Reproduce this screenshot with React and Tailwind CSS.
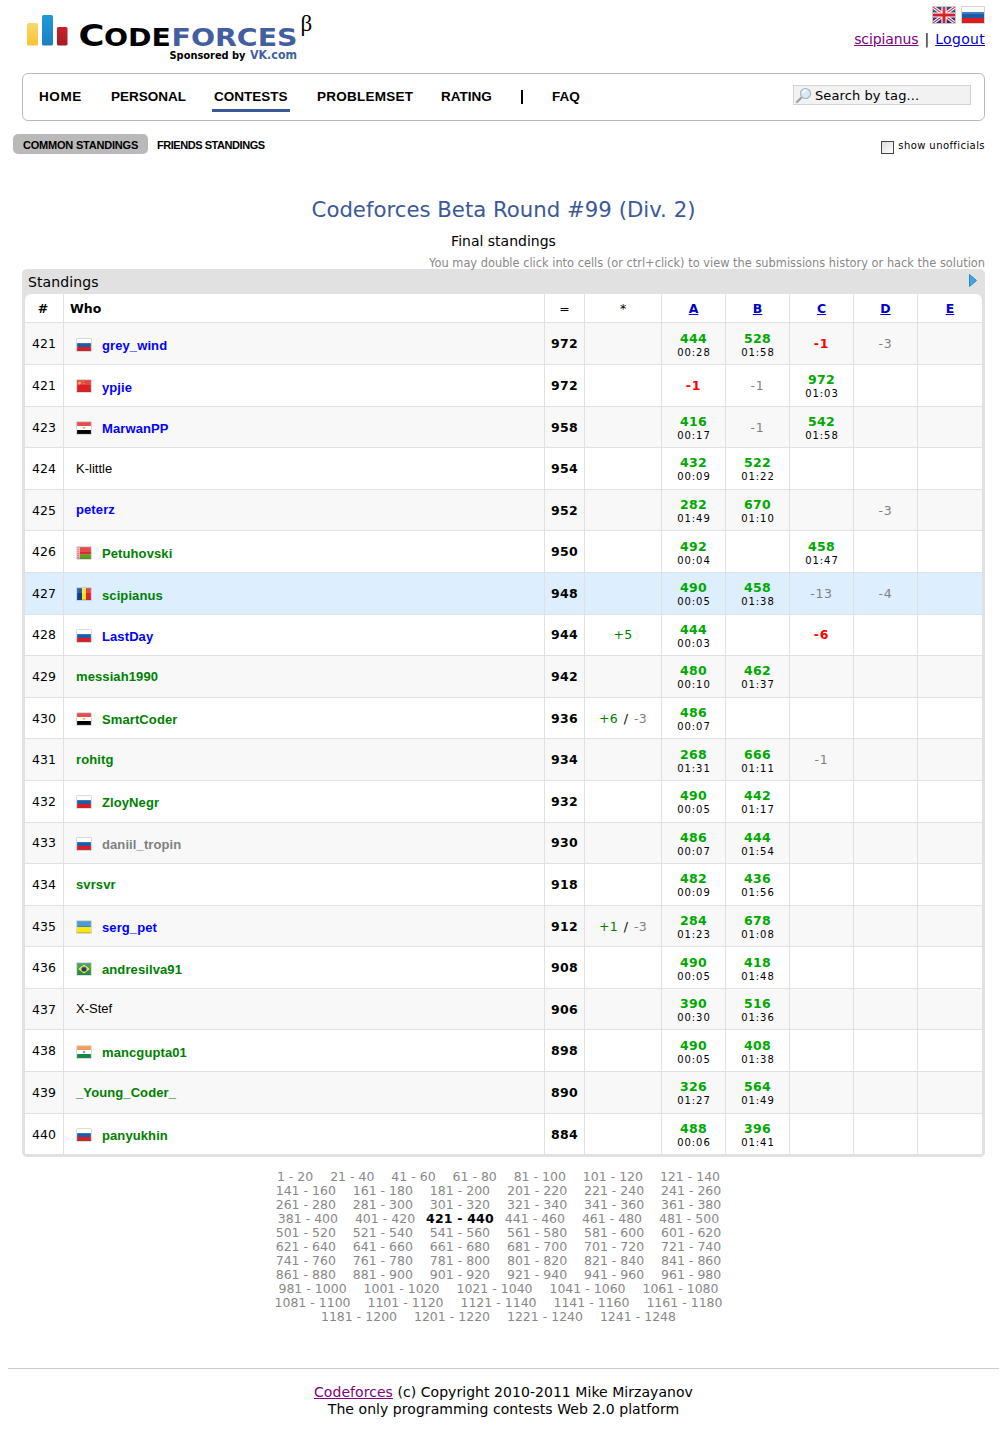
import React from "react";

const BLUE = "text-[#0000ff]";
const GREEN = "text-[#008000]";
const GRAY = "text-[#808080]";
const BLACK = "text-black";

const rows = [
  [421, "ru", "grey_wind", BLUE, 972, "", ["444 00:28", "528 01:58", "!-1", "-3", ""]],
  [421, "cn", "ypjie", BLUE, 972, "", ["!-1", "-1", "972 01:03", "", ""]],
  [423, "eg", "MarwanPP", BLUE, 958, "", ["416 00:17", "-1", "542 01:58", "", ""]],
  [424, "", "K-little", BLACK, 954, "", ["432 00:09", "522 01:22", "", "", ""]],
  [425, "", "peterz", BLUE, 952, "", ["282 01:49", "670 01:10", "", "-3", ""]],
  [426, "by", "Petuhovski", GREEN, 950, "", ["492 00:04", "", "458 01:47", "", ""]],
  [427, "ro", "scipianus", GREEN, 948, "", ["490 00:05", "458 01:38", "-13", "-4", ""]],
  [428, "ru", "LastDay", BLUE, 944, "+5", ["444 00:03", "", "!-6", "", ""]],
  [429, "", "messiah1990", GREEN, 942, "", ["480 00:10", "462 01:37", "", "", ""]],
  [430, "eg", "SmartCoder", GREEN, 936, "+6/-3", ["486 00:07", "", "", "", ""]],
  [431, "", "rohitg", GREEN, 934, "", ["268 01:31", "666 01:11", "-1", "", ""]],
  [432, "ru", "ZloyNegr", GREEN, 932, "", ["490 00:05", "442 01:17", "", "", ""]],
  [433, "ru", "daniil_tropin", GRAY, 930, "", ["486 00:07", "444 01:54", "", "", ""]],
  [434, "", "svrsvr", GREEN, 918, "", ["482 00:09", "436 01:56", "", "", ""]],
  [435, "ua", "serg_pet", BLUE, 912, "+1/-3", ["284 01:23", "678 01:08", "", "", ""]],
  [436, "br", "andresilva91", GREEN, 908, "", ["490 00:05", "418 01:48", "", "", ""]],
  [437, "", "X-Stef", BLACK, 906, "", ["390 00:30", "516 01:36", "", "", ""]],
  [438, "in", "mancgupta01", GREEN, 898, "", ["490 00:05", "408 01:38", "", "", ""]],
  [439, "", "_Young_Coder_", GREEN, 890, "", ["326 01:27", "564 01:49", "", "", ""]],
  [440, "ru", "panyukhin", GREEN, 884, "", ["488 00:06", "396 01:41", "", "", ""]],
];

const pageLines = [
  [1, 7], [8, 13], [14, 19], [20, 25], [26, 31], [32, 37], [38, 43], [44, 49], [50, 54], [55, 59], [60, 63],
];

const COLS = "grid grid-cols-[39px_481px_40px_77px_64px_64px_64px_64px_64px]";

function FlagArt({ code }) {
  switch (code) {
    case "ru":
      return (<><rect width="14" height="4" fill="#fff" /><rect y="4" width="14" height="4" fill="#1c5ca8" /><rect y="8" width="14" height="4" fill="#dd1c22" /></>);
    case "cn":
      return (<><rect width="14" height="12" fill="#dd1f22" /><path d="M2 1.500h1.500v1h1v1h-1l-.5 1h-1l-.5-1h-.5v-1h1z" fill="#f8b034" /><path d="M5.500 1h1v1h-1zM6.500 3h1v1h-1z" fill="#f39a3a" /></>);
    case "eg":
      return (<><rect width="14" height="4" fill="#e02a2e" /><rect y="4" width="14" height="4" fill="#fff" /><rect y="8" width="14" height="4" fill="#000" /><path d="M5.500 5h3l-1 2h-1z" fill="#e9b94f" /></>);
    case "by":
      return (<><rect width="14" height="7.500" fill="#dd2a2e" /><rect y="7.500" width="14" height="4.500" fill="#55a51c" /><rect width="3" height="12" fill="#f0aaaa" /><path d="M1 0v12" stroke="#dd3a3e" strokeWidth="1" strokeDasharray="1 1" /></>);
    case "ro":
      return (<><rect width="5" height="12" fill="#0d3a92" /><rect x="5" width="4" height="12" fill="#fbe11a" /><rect x="9" width="5" height="12" fill="#d9222a" /></>);
    case "ua":
      return (<><rect width="14" height="6" fill="#2f87c4" /><rect y="6" width="14" height="6" fill="#fbe70c" /></>);
    case "br":
      return (<><rect width="14" height="12" fill="#1d9150" /><path d="M7 1.500L13 6 7 10.500 1 6z" fill="#f6e21b" /><circle cx="7" cy="6" r="2.600" fill="#243a86" /></>);
    case "in":
      return (<><rect width="14" height="4" fill="#f08a3c" /><rect y="4" width="14" height="4" fill="#fff" /><rect y="8" width="14" height="4" fill="#128a48" /><circle cx="7" cy="6" r="1.300" fill="#8fa4d4" /></>);
    default:
      return null;
  }
}

function Flag({ code }) {
  return (
    <svg width="16" height="14" viewBox="-1 -1 16 14" className="block shrink-0">
      <rect x="-1" y="-1" width="16" height="14" rx="1.500" fill="#8a8a8a" opacity=".3" />
      <FlagArt code={code} />
      <rect width="14" height="5" fill="#fff" opacity=".16" />
      <rect x=".5" y=".5" width="13" height="11" fill="none" stroke="#fff" opacity=".12" />
      <rect y="11" width="14" height="1" fill="#000" opacity=".18" />
    </svg>
  );
}

function BigFlags() {
  return (
    <div className="flex gap-[5px]">
      <svg width="24" height="18" viewBox="0 0 24 18">
        <rect width="24" height="18" rx="1" fill="#c9c9c9" />
        <svg x="1" y="1" width="22" height="16" viewBox="0 0 22 16">
          <rect width="22" height="16" fill="#22307e" />
          <path d="M0 0L22 16M22 0L0 16" stroke="#fff" strokeWidth="3.400" />
          <path d="M0 0L22 16M22 0L0 16" stroke="#d8303a" strokeWidth="1.300" />
          <path d="M11 0V16M0 8H22" stroke="#fff" strokeWidth="5.200" />
          <path d="M11 0V16M0 8H22" stroke="#d41f2b" strokeWidth="3" />
          <rect width="22" height="7" fill="#fff" opacity=".12" />
        </svg>
      </svg>
      <svg width="24" height="18" viewBox="0 0 24 18">
        <rect width="24" height="18" rx="1" fill="#d4d4d4" />
        <rect x="1" y="1" width="22" height="5" fill="#fafafa" />
        <rect x="1" y="6" width="22" height="6" fill="#1c5ca8" />
        <rect x="1" y="6" width="22" height="2" fill="#3f7fc0" />
        <rect x="1" y="12" width="22" height="5" fill="#dd1c1c" />
      </svg>
    </div>
  );
}

function Logo() {
  return (
    <svg width="320" height="66" viewBox="0 0 320 66" role="img">
      <defs>
        <linearGradient id="ly" x1="0" y1="0" x2="0" y2="1"><stop offset="0" stopColor="#fbd775" /><stop offset="1" stopColor="#f9c32c" /></linearGradient>
        <linearGradient id="lb" x1="0" y1="0" x2="0" y2="1"><stop offset="0" stopColor="#209ad9" /><stop offset="1" stopColor="#1a7fc1" /></linearGradient>
        <linearGradient id="lr" x1="0" y1="0" x2="0" y2="1"><stop offset="0" stopColor="#c8202a" /><stop offset="1" stopColor="#a51b26" /></linearGradient>
      </defs>
      <rect x="27" y="23" width="11" height="22.500" rx="1.500" fill="url(#ly)" />
      <rect x="42" y="15" width="11" height="30.500" rx="1.500" fill="url(#lb)" />
      <rect x="57" y="27" width="10.500" height="18.500" rx="1.500" fill="url(#lr)" />
      <g fontFamily="'DejaVu Sans', sans-serif" fontWeight="700">
        <text x="78.500" y="45.500" fontSize="30" textLength="26" lengthAdjust="spacingAndGlyphs">C</text>
        <text x="104" y="45.500" fontSize="25" textLength="67" lengthAdjust="spacingAndGlyphs">ODE</text>
        <text x="171.500" y="45.500" fontSize="25" fill="#435f9f" textLength="126" lengthAdjust="spacingAndGlyphs">FORCES</text>
        <text x="169.500" y="58.500" fontSize="10.500" textLength="76" lengthAdjust="spacingAndGlyphs">Sponsored by</text>
        <text x="250" y="59" fontSize="11.500" fill="#435f9f" textLength="47" lengthAdjust="spacingAndGlyphs">VK.com</text>
      </g>
      <text x="300.500" y="31" fontSize="23" fontFamily="'Liberation Serif', serif">β</text>
    </svg>
  );
}

function Problem({ value }) {
  if (!value) return null;
  if (value.startsWith("!")) return <span className="pt-[2px] text-[12.5px] font-bold text-[#ff0000] tracking-[0.9px]">{value.slice(1)}</span>;
  if (value.startsWith("-")) return <span className="pt-[2px] text-[12.5px] text-[#808080] tracking-[0.7px]">{value}</span>;
  const [points, time] = value.split(" ");
  return (
    <div className="flex flex-col items-center pt-[2px]">
      <span className="text-[12.5px] leading-[15px] font-bold text-[#00a900] tracking-[0.3px]">{points}</span>
      <span className="text-[10px] leading-[13px] tracking-[0.9px] pl-px">{time}</span>
    </div>
  );
}

function Hacks({ value }) {
  if (!value) return null;
  const [plus, minus] = value.split("/");
  return (
    <span className="pt-[2px] text-[12.5px] tracking-[0.3px] [word-spacing:1.5px]">
      <span className="text-[#008000]">{plus}</span>
      {minus && <> / <span className="text-[#808080]">{minus}</span></>}
    </span>
  );
}

function Row({ row, index }) {
  const [rank, flag, name, color, score, hacks, problems] = row;
  const bg = rank === 427 ? "bg-[#ddeeff]" : index % 2 === 0 ? "bg-[#f8f8f8]" : "bg-white";
  const cell = "flex items-center justify-center border-r border-b border-[#e1e1e1]";
  return (
    <div className={`${COLS} h-[41.6px] ${bg}`}>
      <div className={`${cell} pt-[2px] text-[12.5px]`}>{rank}</div>
      <div className={`flex items-center border-r border-b border-[#e1e1e1] pl-[12px] ${color}`}>
        {flag && <span className="mr-[10px] pt-[2px]"><Flag code={flag} /></span>}
        <span className={`font-['Liberation_Sans',sans-serif] text-[13px] ${color === BLACK ? "" : "font-bold tracking-[0.1px]"} ${flag ? "pt-[4px]" : ""}`}>{name}</span>
      </div>
      <div className={`${cell} pt-[2px] text-[12.5px] font-bold tracking-[0.3px]`}>{score}</div>
      <div className={cell}><Hacks value={hacks} /></div>
      {problems.map((p, i) => (
        <div key={i} className={`flex items-center justify-center border-b border-[#e1e1e1] ${i < 4 ? "border-r" : ""}`}><Problem value={p} /></div>
      ))}
    </div>
  );
}

function Pages({ from, to }) {
  const items = [];
  for (let i = from; i <= to; i++) {
    const start = (i - 1) * 20 + 1;
    items.push({ start, end: i === 63 ? 1248 : start + 19 });
  }
  return (
    <div className="flex justify-center gap-[16.9px] h-[14px] leading-[14px] whitespace-nowrap">
      {items.map(({ start, end }) =>
        start === 421 ? (
          <span key={start} className="-mx-[6px] font-bold text-black tracking-[0.2px]">{start} - {end}</span>
        ) : (
          <span key={start}>{start} - {end}</span>
        )
      )}
    </div>
  );
}

export default function App() {
  return (
    <div className="w-[1007px] h-[1442px] overflow-hidden bg-white text-black font-['DejaVu_Sans',sans-serif]">
      <header className="flex justify-between h-[73px] pr-[22px]">
        <Logo />
        <div className="flex flex-col items-end pt-[6px]">
          <BigFlags />
          <div className="mt-[6px] text-[14px] leading-[18px] whitespace-nowrap">
            <a className="underline text-[#800080] tracking-[-0.1px]">scipianus</a>
            <span className="mx-[6px]">|</span>
            <a className="underline text-[#0000cc] tracking-[0.3px]">Logout</a>
          </div>
        </div>
      </header>

      <nav className="mx-[22px] h-[48px] w-[963px] border border-[#b9b9b9] rounded-[6px] flex items-start pl-[16px] pr-[13px] font-['Liberation_Sans',sans-serif] font-bold text-[13.5px] leading-[18px]">
        <span className="mt-[14px] w-[72px] tracking-[0.6px]">HOME</span>
        <span className="mt-[14px] w-[101px]">PERSONAL</span>
        <span className="mt-[14px] w-[78px] pl-[2px] h-[24px] border-b-[3px] border-[#3b5998]">CONTESTS</span>
        <span className="mt-[14px] ml-[27px] w-[124px] tracking-[0.25px]">PROBLEMSET</span>
        <span className="mt-[14px] w-[80px]">RATING</span>
        <span className="mt-[16px] w-[2px] h-[14px] bg-black" />
        <span className="mt-[14px] ml-[29px]">FAQ</span>
        <div className="mt-[11px] ml-auto w-[178px] h-[20px] flex items-center border border-[#d3d3d3] bg-[#f2f2f2] font-['DejaVu_Sans',sans-serif] font-normal text-[13px]">
          <svg width="18" height="18" viewBox="0 0 18 18" className="ml-[1px] shrink-0">
            <path d="M2 16L7 11" stroke="#a0a0a0" strokeWidth="2.400" strokeLinecap="round" />
            <circle cx="10.500" cy="7.500" r="5" fill="#d5ecf8" stroke="#b0b4b8" strokeWidth="1.200" />
            <path d="M7.800 7a3 3 0 0 1 3-2.500" fill="none" stroke="#fff" strokeWidth="1.300" />
          </svg>
          <span className="ml-[2px] pt-[2px] tracking-[0.1px]">Search by tag...</span>
        </div>
      </nav>

      <div className="flex items-start justify-between pl-[13px] pr-[22px] mt-[13px] h-[62px]">
        <div className="flex font-['Liberation_Sans',sans-serif] font-bold text-[11px] leading-[22px] whitespace-nowrap">
          <span className="w-[135px] h-[20px] text-center rounded-[5px] bg-[#b9b9b9] tracking-[-0.2px]">COMMON STANDINGS</span>
          <span className="ml-[9px] tracking-[-0.45px]">FRIENDS STANDINGS</span>
        </div>
        <label className="flex items-start text-[10px] leading-[23px] whitespace-nowrap">
          <span className="mt-[7px] mr-[4px] size-[13px] border border-[#444] bg-linear-to-br from-[#dcdcdc] to-white" />
          <span className="tracking-[0.42px]">show unofficials</span>
        </label>
      </div>

      <h1 className="h-[28px] leading-[28px] text-center text-[21.25px] text-[#3b5998] whitespace-nowrap">Codeforces Beta Round #99 (Div. 2)</h1>
      <div className="mt-[8px] h-[18px] leading-[18px] text-center text-[14px]">Final standings</div>
      <div className="mt-[5px] mr-[22px] h-[14px] leading-[16px] text-right text-[11.4px] text-[#888]">You may double click into cells (or ctrl+click) to view the submissions history or hack the solution</div>

      <section className="mx-[22px] w-[963px] h-[888px] overflow-hidden rounded-[5px] bg-[#e1e1e1] px-[3px]">
        <div className="flex justify-between h-[25px] leading-[26px] pl-[3px] pr-[5px] text-[14px] tracking-[0.1px]">
          Standings
          <svg width="8" height="13" viewBox="0 0 8 13" className="mt-[5px]"><path d="M.500.500L7.500 6.500.500 12.500z" fill="#43a5e2" stroke="#2b86c9" /></svg>
        </div>
        <div className="rounded-t-[6px] overflow-hidden bg-white">
          <div className={`${COLS} h-[29.4px] text-[12.5px] [&>div]:border-b [&>div]:border-[#e1e1e1] [&>div]:flex [&>div]:items-center [&>div]:justify-center [&>div]:pt-[2px] [&>div:not(:last-child)]:border-r`}>
            <div className="font-bold pr-[2px]">#</div>
            <div className="font-bold"><span className="w-full pl-[6px]">Who</span></div>
            <div>=</div>
            <div>*</div>
            {["A", "B", "C", "D", "E"].map((p) => (
              <div key={p}><a className="font-bold underline text-[#0000cc]">{p}</a></div>
            ))}
          </div>
          {rows.map((r, i) => <Row key={i} row={r} index={i} />)}
        </div>
      </section>

      <div className="mt-[13px] w-[997px] text-[12.5px] text-[#888]">
        {pageLines.map(([a, b]) => <Pages key={a} from={a} to={b} />)}
      </div>

      <footer className="mx-[8px] mt-[44px] border-t border-[#ccc] pt-[15px] text-center text-[14px] leading-[17px] tracking-[0.05px]">
        <a className="underline text-[#800080]">Codeforces</a> (c) Copyright 2010-2011 Mike Mirzayanov<br />
        The only programming contests Web 2.0 platform
      </footer>
    </div>
  );
}
